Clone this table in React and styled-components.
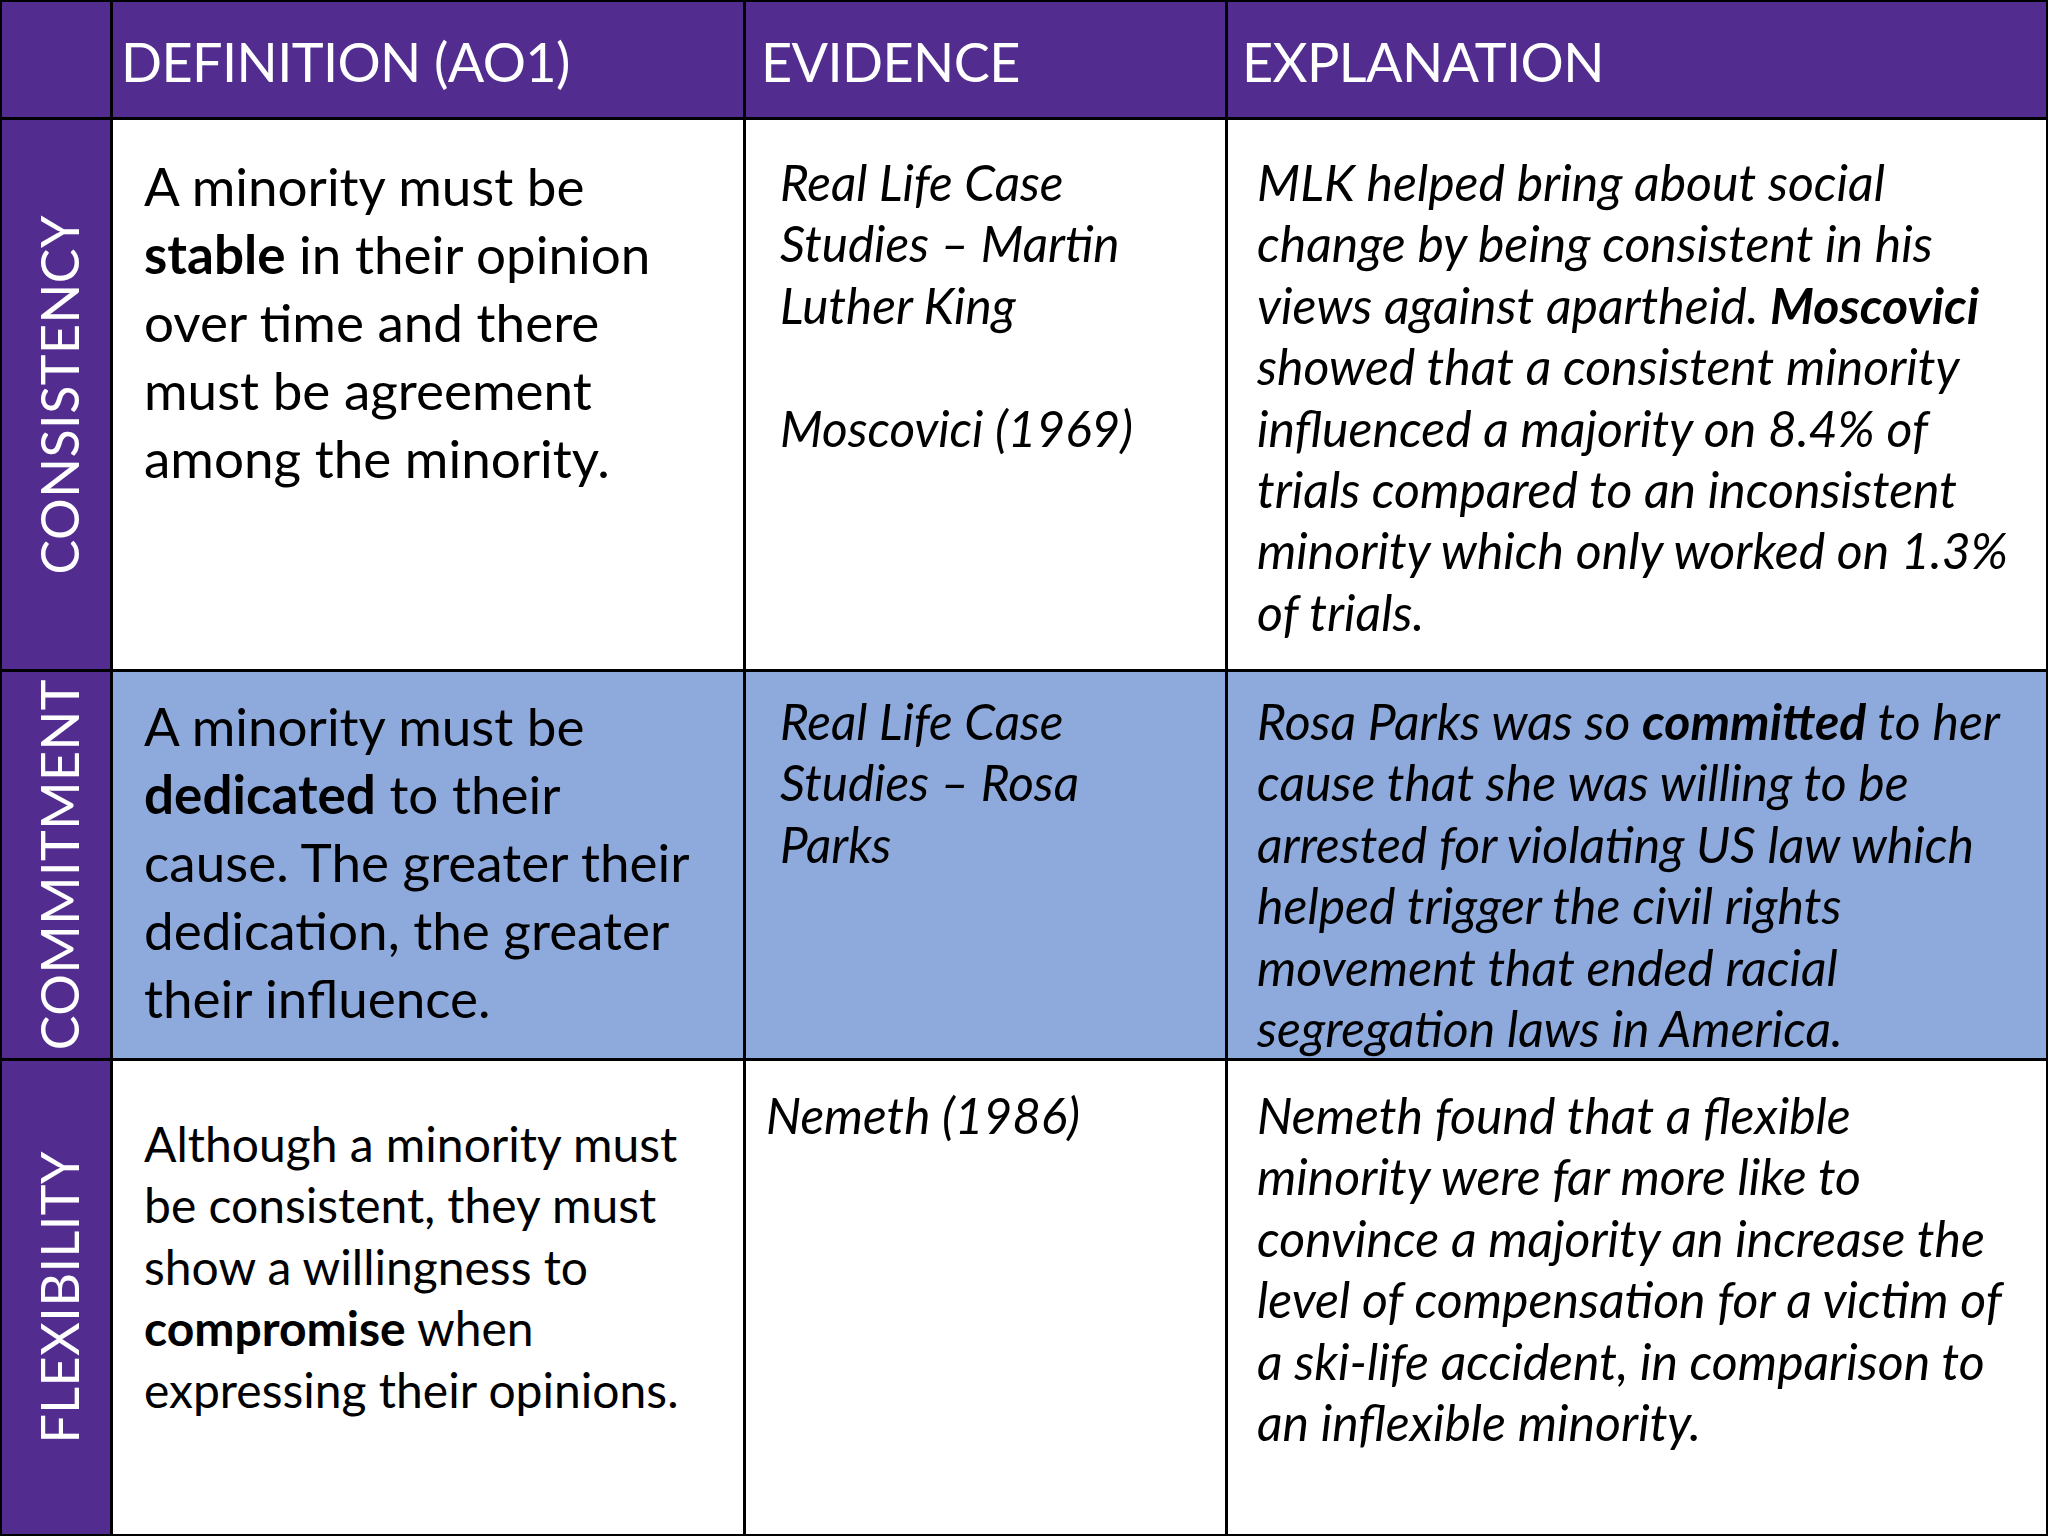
import React from "react";
import styled, { createGlobalStyle } from "styled-components";

const GlobalStyle = createGlobalStyle`
  html, body { margin: 0; padding: 0; background: #ffffff; }
  body { font-family: Lato, "Open Sans", "Liberation Sans", sans-serif; }
`;

const PURPLE = "#522d8f";
const BLUE = "#8eaadc";

const Table = styled.div`
  width: 2048px;
  height: 1536px;
  box-sizing: border-box;
  padding: 2px;
  background: #000;
  display: grid;
  grid-template-columns: 108px 630px 479px 818px;
  grid-template-rows: 115px 549px 386px 473px;
  gap: 3px;
  overflow: hidden;
`;

const Corner = styled.div`
  background: ${PURPLE};
`;

const HeaderCell = styled.div`
  background: ${PURPLE};
  color: #fff;
  display: flex;
  align-items: center;
  padding: 4px 0 0 ${(p) => p.$pl}px;
  font-family: Lato, "Open Sans", sans-serif;
  font-size: 54px;
  letter-spacing: -0.6px;
  white-space: nowrap;
  box-sizing: border-box;
`;

const LabelCell = styled.div`
  background: ${PURPLE};
  display: flex;
  align-items: center;
  justify-content: center;
  padding-left: 6px;
  box-sizing: border-box;
`;

const Label = styled.span`
  writing-mode: vertical-rl;
  transform: rotate(180deg);
  color: #fff;
  font-family: Lato, "Open Sans", sans-serif;
  font-size: 52px;
  line-height: 1;
  letter-spacing: 0.5px;
  white-space: nowrap;
`;

const Cell = styled.div`
  background: ${(p) => (p.$blue ? BLUE : "#fff")};
  padding: ${(p) => p.$pt}px 0 0 ${(p) => p.$pl}px;
  box-sizing: border-box;
  overflow: hidden;
  color: #000;
  font-family: Lato, "Open Sans", sans-serif;
  font-size: ${(p) => p.$size}px;
  line-height: ${(p) => p.$lh}px;
  font-style: ${(p) => (p.$italic ? "italic" : "normal")};
  white-space: nowrap;
`;

const Line = styled.div``;

const B = styled.b`
  font-weight: 700;
`;

const rows = [
  {
    label: "CONSISTENCY",
    blue: false,
    def: {
      pt: 32,
      size: 53,
      lh: 68,
      lines: [
        ["A minority must be"],
        [<B key="b">stable</B>, " in their opinion"],
        ["over time and there"],
        ["must be agreement"],
        ["among the minority."],
      ],
    },
    ev: {
      pt: 32,
      pl: 34,
      lines: [["Real Life Case"], ["Studies \u2013 Martin"], ["Luther King"], ["\u00a0"], ["Moscovici (1969)"]],
    },
    ex: {
      pt: 32,
      lines: [
        ["MLK helped bring about social"],
        ["change by being consistent in his"],
        ["views against apartheid. ", <B key="b">Moscovici</B>],
        ["showed that a consistent minority"],
        ["influenced a majority on 8.4% of"],
        ["trials compared to an inconsistent"],
        ["minority which only worked on 1.3%"],
        ["of trials."],
      ],
    },
  },
  {
    label: "COMMITMENT",
    blue: true,
    def: {
      pt: 20,
      size: 53,
      lh: 68,
      lines: [
        ["A minority must be"],
        [<B key="b">dedicated</B>, " to their"],
        ["cause. The greater their"],
        ["dedication, the greater"],
        ["their influence."],
      ],
    },
    ev: {
      pt: 19,
      pl: 34,
      lines: [["Real Life Case"], ["Studies \u2013 Rosa"], ["Parks"]],
    },
    ex: {
      pt: 19,
      lines: [
        ["Rosa Parks was so ", <B key="b">committed</B>, " to her"],
        ["cause that she was willing to be"],
        ["arrested for violating US law which"],
        ["helped trigger the civil rights"],
        ["movement that ended racial"],
        ["segregation laws in America."],
      ],
    },
  },
  {
    label: "FLEXIBILITY",
    blue: false,
    def: {
      pt: 52,
      size: 48,
      lh: 61.4,
      lines: [
        ["Although a minority must"],
        ["be consistent, they must"],
        ["show a willingness to"],
        [<B key="b">compromise</B>, " when"],
        ["expressing their opinions."],
      ],
    },
    ev: {
      pt: 24,
      pl: 20,
      lines: [["Nemeth (1986)"]],
    },
    ex: {
      pt: 24,
      lines: [
        ["Nemeth found that a flexible"],
        ["minority were far more like to"],
        ["convince a majority an increase the"],
        ["level of compensation for a victim of"],
        ["a ski-life accident, in comparison to"],
        ["an inflexible minority."],
      ],
    },
  },
];

const renderLines = (lines) =>
  lines.map((parts, i) => <Line key={i}>{parts}</Line>);

export default function App() {
  return (
    <>
      <GlobalStyle />
      <Table>
        <Corner />
        <HeaderCell $pl={8}>DEFINITION (AO1)</HeaderCell>
        <HeaderCell $pl={15}>EVIDENCE</HeaderCell>
        <HeaderCell $pl={14}>EXPLANATION</HeaderCell>
        {rows.map((r) => (
          <React.Fragment key={r.label}>
            <LabelCell>
              <Label>{r.label}</Label>
            </LabelCell>
            <Cell $blue={r.blue} $pt={r.def.pt} $pl={31} $size={r.def.size} $lh={r.def.lh}>
              {renderLines(r.def.lines)}
            </Cell>
            <Cell $blue={r.blue} $pt={r.ev.pt} $pl={r.ev.pl} $size={49.5} $lh={61.4} $italic>
              {renderLines(r.ev.lines)}
            </Cell>
            <Cell $blue={r.blue} $pt={r.ex.pt} $pl={29} $size={50} $lh={61.4} $italic>
              {renderLines(r.ex.lines)}
            </Cell>
          </React.Fragment>
        ))}
      </Table>
    </>
  );
}
